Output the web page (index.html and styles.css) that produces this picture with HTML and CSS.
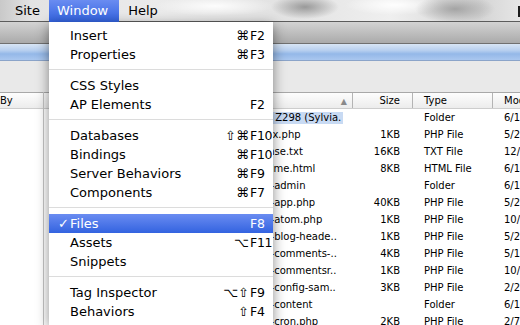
FILE: index.html
```html
<!DOCTYPE html>
<html lang="en">
<head>
  <meta charset="UTF-8">
  <meta name="viewport" content="width=device-width, initial-scale=1.0">
  <title>Dreamweaver - Window menu</title>
  <link rel="stylesheet" href="styles.css">
</head>
<body>
  <div class="menubar">
    <span class="menu-title">Site</span>
    <span class="menu-title active">Window</span>
    <span class="menu-title">Help</span>
    <span class="status-edge"></span>
  </div>

  <div class="window">
    <div class="toolbar"></div>
    <div class="tabstrip"></div>
    <div class="options"></div>

    <div class="panes">
      <div class="pane remote">
        <div class="remote-head">By</div>
      </div>

      <div class="pane local">
        <div class="list-head">
          <div class="c-name">Local Files <span class="sort">▲</span></div>
          <div class="c-size">Size</div>
          <div class="c-type">Type</div>
          <div class="c-mod">Modified</div>
        </div>

        <div class="row root">
          <div class="c-name"><span class="picked">Site - Z298 (Sylvia.</span></div>
          <div class="c-size"></div>
          <div class="c-type">Folder</div>
          <div class="c-mod">6/13/08 2:15 PM</div>
        </div>
        <div class="row bare">
          <div class="c-name">index.php</div>
          <div class="c-size">1KB</div>
          <div class="c-type">PHP File</div>
          <div class="c-mod">5/25/08 9:10 AM</div>
        </div>
        <div class="row bare">
          <div class="c-name">license.txt</div>
          <div class="c-size">16KB</div>
          <div class="c-type">TXT File</div>
          <div class="c-mod">12/9/07 4:02 PM</div>
        </div>
        <div class="row bare">
          <div class="c-name">readme.html</div>
          <div class="c-size">8KB</div>
          <div class="c-type">HTML File</div>
          <div class="c-mod">6/12/08 8:47 PM</div>
        </div>
        <div class="row">
          <div class="c-name">wp-admin</div>
          <div class="c-size"></div>
          <div class="c-type">Folder</div>
          <div class="c-mod">6/13/08 2:15 PM</div>
        </div>
        <div class="row">
          <div class="c-name">wp-app.php</div>
          <div class="c-size">40KB</div>
          <div class="c-type">PHP File</div>
          <div class="c-mod">5/24/08 1:30 PM</div>
        </div>
        <div class="row">
          <div class="c-name">wp-atom.php</div>
          <div class="c-size">1KB</div>
          <div class="c-type">PHP File</div>
          <div class="c-mod">10/2/07 7:51 PM</div>
        </div>
        <div class="row">
          <div class="c-name">wp-blog-heade..</div>
          <div class="c-size">1KB</div>
          <div class="c-type">PHP File</div>
          <div class="c-mod">5/25/08 9:10 AM</div>
        </div>
        <div class="row">
          <div class="c-name">wp-comments-..</div>
          <div class="c-size">4KB</div>
          <div class="c-type">PHP File</div>
          <div class="c-mod">5/19/08 3:22 PM</div>
        </div>
        <div class="row">
          <div class="c-name">wp-commentsr..</div>
          <div class="c-size">1KB</div>
          <div class="c-type">PHP File</div>
          <div class="c-mod">10/2/07 7:51 PM</div>
        </div>
        <div class="row">
          <div class="c-name">wp-config-sam..</div>
          <div class="c-size">3KB</div>
          <div class="c-type">PHP File</div>
          <div class="c-mod">2/20/08 6:05 PM</div>
        </div>
        <div class="row">
          <div class="c-name">wp-content</div>
          <div class="c-size"></div>
          <div class="c-type">Folder</div>
          <div class="c-mod">6/13/08 2:15 PM</div>
        </div>
        <div class="row">
          <div class="c-name">wp-cron.php</div>
          <div class="c-size">2KB</div>
          <div class="c-type">PHP File</div>
          <div class="c-mod">2/7/08 11:40 AM</div>
        </div>
      </div>
    </div>
  </div>

  <!-- the open Window menu -->
  <ul class="dropdown">
    <li class="item"><span class="check"></span><span class="label">Insert</span><span class="mods">⌘</span><span class="key">F2</span></li>
    <li class="item"><span class="check"></span><span class="label">Properties</span><span class="mods">⌘</span><span class="key">F3</span></li>
    <li class="sep"></li>
    <li class="item"><span class="check"></span><span class="label">CSS Styles</span><span class="mods"></span><span class="key"></span></li>
    <li class="item"><span class="check"></span><span class="label">AP Elements</span><span class="mods"></span><span class="key">F2</span></li>
    <li class="sep"></li>
    <li class="item"><span class="check"></span><span class="label">Databases</span><span class="mods">⇧⌘</span><span class="key">F10</span></li>
    <li class="item"><span class="check"></span><span class="label">Bindings</span><span class="mods">⌘</span><span class="key">F10</span></li>
    <li class="item"><span class="check"></span><span class="label">Server Behaviors</span><span class="mods">⌘</span><span class="key">F9</span></li>
    <li class="item"><span class="check"></span><span class="label">Components</span><span class="mods">⌘</span><span class="key">F7</span></li>
    <li class="sep"></li>
    <li class="item selected"><span class="check">✓</span><span class="label">Files</span><span class="mods"></span><span class="key">F8</span></li>
    <li class="item"><span class="check"></span><span class="label">Assets</span><span class="mods">⌥</span><span class="key">F11</span></li>
    <li class="item"><span class="check"></span><span class="label">Snippets</span><span class="mods"></span><span class="key"></span></li>
    <li class="sep"></li>
    <li class="item"><span class="check"></span><span class="label">Tag Inspector</span><span class="mods">⌥⇧</span><span class="key">F9</span></li>
    <li class="item"><span class="check"></span><span class="label">Behaviors</span><span class="mods">⇧</span><span class="key">F4</span></li>
    <li class="item"><span class="check"></span><span class="label">Results</span><span class="mods">⇧</span><span class="key">F7</span></li>
  </ul>
</body>
</html>
```

FILE: styles.css
```css
* {
  box-sizing: border-box;
}
html, body {
  margin: 0;
  padding: 0;
  overflow: hidden;
}
body {
  width: 520px;
  height: 325px;
  position: relative;
  font-family: "DejaVu Sans", sans-serif;
  color: #000;
  background: #fff;
}

/* top menu bar (blurred desktop behind it) */
.menubar {
  height: 22px;
  display: flex;
  padding-left: 6px;
  font-size: 13px;
  line-height: 22px;
  background:
    radial-gradient(ellipse 34px 12px at 305px 7px, rgba(140, 140, 140, 0.85), transparent),
    radial-gradient(ellipse 40px 14px at 455px 9px, rgba(150, 150, 150, 0.8), transparent),
    radial-gradient(ellipse 50px 10px at 395px 5px, rgba(255, 255, 255, 0.95), transparent),
    radial-gradient(ellipse 60px 10px at 215px 6px, rgba(255, 255, 255, 0.9), transparent),
    linear-gradient(90deg, #c9c9c9 0, #e3e3e3 6%, #ebebeb 30%, #e2e2e2 55%, #efefef 75%, #d4d4d4 92%, #e6e6e6 100%);
  box-shadow: inset 0 -1px 0 #5c5c5c;
}
.menu-title {
  padding: 0 9px;
}
.menu-title.active {
  padding: 0 11px 0 8px;
  color: #fff;
  background: linear-gradient(#6a8cf1, #3363e0);
}
.status-edge {
  margin: 6px 0 0 auto;
  width: 2px;
  height: 11px;
  background: #1c1c1c;
}

/* files window */
.toolbar {
  height: 22px;
  background: linear-gradient(#d3d3d3, #aaaaaa);
  border-bottom: 1px solid #707070;
}
.tabstrip {
  height: 17px;
  background: linear-gradient(#d8e5f5 0, #b7cfef 40%, #94b8e8 62%, #aac7ef 100%);
  border-bottom: 1px solid #8ba4c9;
}
.options {
  height: 31px;
  background: #e9e9e9;
}

.panes {
  display: flex;
  height: 233px;
  overflow: hidden;
  font-size: 10px;
}
.remote {
  width: 44px;
  border-right: 1px solid #c4c4c4;
}
.remote-head {
  height: 17px;
  line-height: 15px;
  border-top: 1px solid #a8a8a8;
  border-bottom: 1px solid #cdcdcd;
  background: linear-gradient(#fdfdfd, #ececec);
}
.local {
  flex: 1;
}

.list-head,
.row {
  display: grid;
  grid-template-columns: 309px 60px 80px 1fr;
  white-space: nowrap;
}
.list-head {
  height: 17px;
  line-height: 15px;
  border-top: 1px solid #a8a8a8;
  border-bottom: 1px solid #cdcdcd;
  background: linear-gradient(#fdfdfd, #ececec);
}
.list-head > div {
  border-right: 1px solid #b4b4b4;
}
.list-head .c-name {
  text-align: right;
  padding-right: 5px;
  color: transparent;
}
.sort {
  font-size: 8px;
  color: #8a8a8a;
}
.list-head .c-mod {
  border-right: none;
}

.row {
  height: 17px;
  line-height: 17px;
}
.c-name {
  overflow: hidden;
  padding-left: 212px;
}
.bare .c-name {
  padding-left: 207px;
}
.root .c-name {
  padding-left: 202px;
}
.picked {
  display: inline-block;
  line-height: 12px;
  padding: 0 2px 0 0;
  background: #c8daf3;
}
.c-size {
  text-align: right;
  padding-right: 12px;
}
.row .c-size {
  padding-right: 13px;
}
.c-type {
  padding-left: 11px;
}
.c-mod {
  padding-left: 11px;
  overflow: hidden;
}

/* dropdown menu */
.dropdown {
  position: absolute;
  left: 49px;
  top: 22px;
  width: 224px;
  height: 303px;
  overflow: hidden;
  margin: 0;
  padding: 4px 0;
  list-style: none;
  background: #fff;
  font-size: 13px;
  line-height: 19px;
  box-shadow: 0 3px 12px rgba(0, 0, 0, 0.45);
}
.item {
  display: flex;
  height: 19px;
  white-space: nowrap;
}
.check {
  width: 21px;
  padding-left: 9px;
}
.label {
  flex: 1;
}
.mods {
  text-align: right;
}
.key {
  width: 24px;
  padding-left: 1px;
  font-size: 12.5px;
  letter-spacing: -0.3px;
}
.item.selected {
  color: #fff;
  background: linear-gradient(#6a8cf1, #3363e0);
}
.sep {
  height: 1px;
  margin: 5px 0 6px;
  background: #dcdcdc;
}
```
